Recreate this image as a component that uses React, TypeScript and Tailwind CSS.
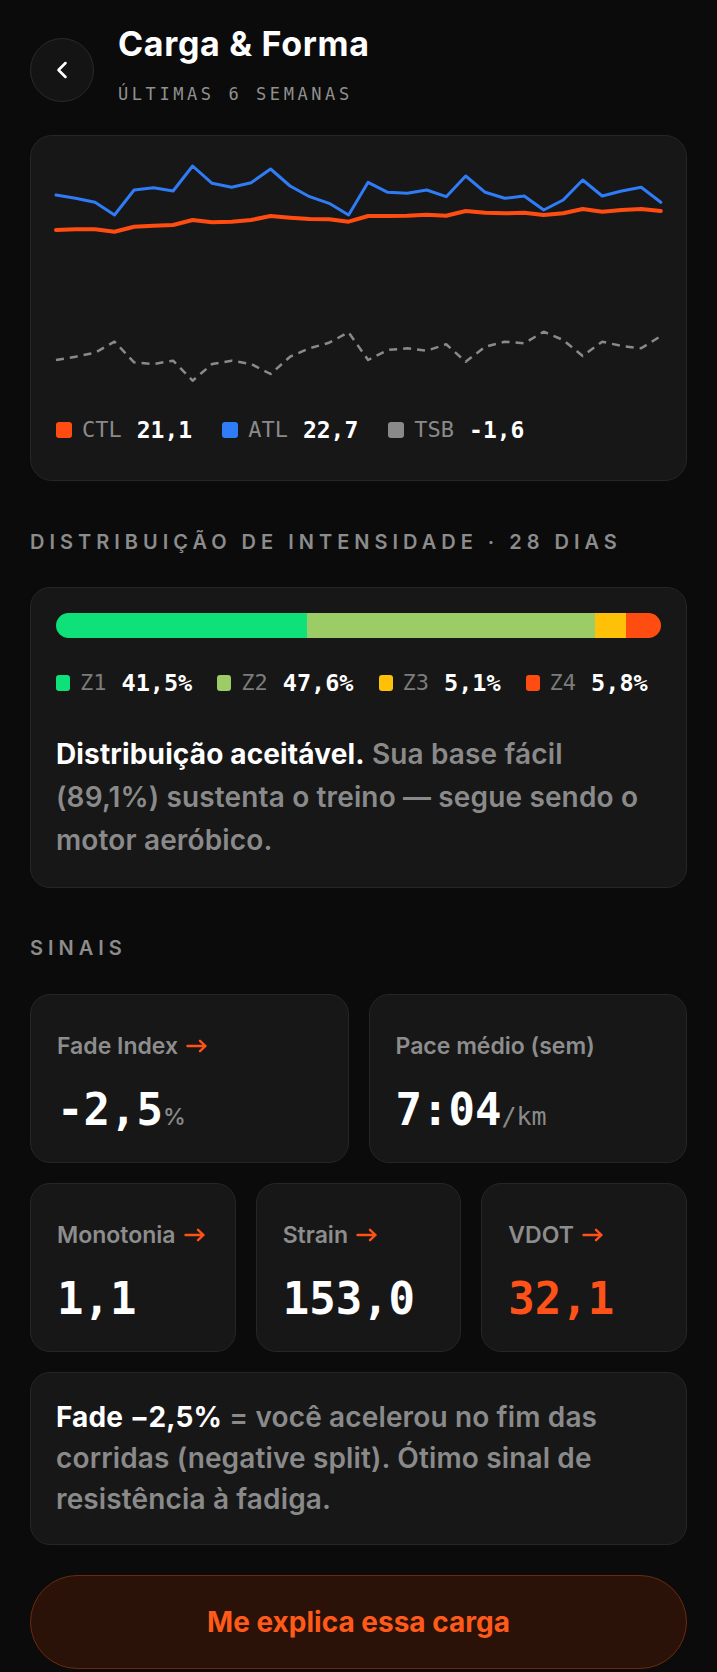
import { ChevronLeft } from 'lucide-react';

const mono = 'font-[family-name:DejaVu_Sans_Mono,monospace]';

const blue = [165, 175, 187, 225, 150, 143, 153, 78, 130, 142, 128, 87, 138, 170, 190, 225, 127, 157, 160, 150, 170, 108, 157, 175, 168, 210, 180, 120, 168, 153, 142, 187];
const orange = [270, 268, 268, 275, 260, 257, 255, 240, 247, 245, 240, 228, 233, 237, 238, 245, 228, 228, 227, 224, 227, 213, 218, 220, 218, 225, 220, 207, 215, 210, 207, 213];
const gray = [660, 650, 638, 605, 667, 672, 662, 722, 672, 662, 672, 702, 650, 625, 608, 577, 660, 630, 625, 632, 613, 665, 620, 605, 610, 575, 600, 648, 605, 618, 625, 588];

function toPoints(ys: number[]) {
  return ys
    .map((y, i) => {
      const x = ((60 + i * 46.77) * 654) / 1568;
      return `${x.toFixed(1)},${(y / 3).toFixed(1)}`;
    })
    .join(' ');
}

function Arrow() {
  return (
    <svg width="22" height="14" viewBox="0 0 22 14" className="ml-[8px] inline-block" fill="none" stroke="#ff5219" strokeWidth={2.4} strokeLinecap="round" strokeLinejoin="round">
      <path d="M1.5 7h18M14 1.8 19.5 7 14 12.2" />
    </svg>
  );
}

function Legend({ color, label, value }: { color: string; label: string; value: string }) {
  return (
    <div className="flex items-center">
      <span className={`w-[16px] h-[16px] rounded-[3px] ${color}`} />
      <span className={`ml-[10px] text-[22px] text-[#8a8a8a] ${mono}`}>{label}</span>
      <span className={`ml-[15px] text-[23px] text-white font-bold ${mono}`}>{value}</span>
    </div>
  );
}

function Zone({ color, label, value }: { color: string; label: string; value: string }) {
  return (
    <div className="flex items-center">
      <span className={`w-[14px] h-[16px] rounded-[3px] ${color}`} />
      <span className={`ml-[10px] text-[22px] text-[#7c7c7c] ${mono}`}>{label}</span>
      <span className={`ml-[15px] text-[23.5px] text-white font-bold ${mono}`}>{value}</span>
    </div>
  );
}

function Signal({ label, arrow, children }: { label: string; arrow?: boolean; children: React.ReactNode }) {
  return (
    <div className="h-[169px] rounded-[20px] border border-[#262626] bg-[#171717] px-[26px] pt-[37px]">
      <div className="flex items-center text-[23px] leading-[28px] font-semibold text-[#8d8d8d]">
        {label}
        {arrow && <Arrow />}
      </div>
      <div className="mt-[28px] flex items-baseline">{children}</div>
    </div>
  );
}

export default function App() {
  return (
    <div className="min-h-screen bg-[#0b0b0b] font-[family-name:Inter,sans-serif] px-[30px] pb-[2px]">
      {/* Header */}
      <div className="flex items-start gap-[24px] pt-[24px]">
        <button className="mt-[14px] w-[64px] h-[64px] rounded-full border border-[#2a2a2a] bg-[#141414] flex items-center justify-center">
          <ChevronLeft size={28} strokeWidth={2.2} className="text-white" />
        </button>
        <div>
          <h1 className="text-[34px] leading-[40px] font-bold text-white tracking-[0.02em]">Carga &amp; Forma</h1>
          <p className={`mt-[18px] text-[17px] leading-[24px] tracking-[0.21em] text-[#909090] ${mono}`}>ÚLTIMAS 6 SEMANAS</p>
        </div>
      </div>

      {/* Chart */}
      <div className="mt-[29px] rounded-[22px] border border-[#262626] bg-[#171717] overflow-hidden pb-[36px]">
        <svg width={654} height={260} className="block mt-[4px]" viewBox="0 0 654 260">
          <polyline points={toPoints(gray)} fill="none" stroke="#8a8a8a" strokeWidth={2.5} strokeDasharray="8 6" strokeLinejoin="round" />
          <polyline points={toPoints(blue)} fill="none" stroke="#2f7cf6" strokeWidth={3} strokeLinejoin="round" strokeLinecap="round" />
          <polyline points={toPoints(orange)} fill="none" stroke="#ff4d12" strokeWidth={4} strokeLinejoin="round" strokeLinecap="round" />
        </svg>
        <div className="mt-[16px] pl-[25px] flex items-center gap-[30px] leading-[28px]">
          <Legend color="bg-[#ff4d12]" label="CTL" value="21,1" />
          <Legend color="bg-[#2f7cf6]" label="ATL" value="22,7" />
          <Legend color="bg-[#8a8a8a]" label="TSB" value="-1,6" />
        </div>
      </div>

      {/* Intensity */}
      <h2 className="mt-[49px] text-[20px] leading-[24px] font-semibold tracking-[0.25em] text-[#8c8c8c]">
        DISTRIBUIÇÃO DE INTENSIDADE · 28 DIAS
      </h2>
      <div className="mt-[33px] rounded-[20px] border border-[#262626] bg-[#171717] px-[25px] pt-[25px] pb-[25px]">
        <div className="flex h-[25px] rounded-full overflow-hidden">
          <div className="bg-[#0ee07a]" style={{ width: '41.5%' }} />
          <div className="bg-[#9ccc65]" style={{ width: '47.6%' }} />
          <div className="bg-[#ffc107]" style={{ width: '5.1%' }} />
          <div className="bg-[#ff4d12]" style={{ width: '5.8%' }} />
        </div>
        <div className="mt-[31px] flex items-center gap-[25px] leading-[28px]">
          <Zone color="bg-[#0ee07a]" label="Z1" value="41,5%" />
          <Zone color="bg-[#9ccc65]" label="Z2" value="47,6%" />
          <Zone color="bg-[#ffc107]" label="Z3" value="5,1%" />
          <Zone color="bg-[#ff4d12]" label="Z4" value="5,8%" />
        </div>
        <p className="mt-[36px] text-[28px] leading-[43px] font-semibold text-[#8a8a8a] tracking-[0.005em]">
          <span className="font-bold text-white">Distribuição aceitável.</span> Sua base fácil (89,1%) sustenta o treino — segue sendo o motor aeróbico.
        </p>
      </div>

      {/* Signals */}
      <h2 className="mt-[48px] text-[20px] leading-[24px] font-semibold tracking-[0.25em] text-[#8c8c8c]">SINAIS</h2>
      <div className="mt-[34px] grid grid-cols-2 gap-[20px]">
        <Signal label="Fade Index" arrow>
          <span className={`text-[44px] leading-[44px] font-bold text-white ${mono}`}>-2,5</span>
          <span className="text-[23px] font-medium text-[#8a8a8a]">%</span>
        </Signal>
        <Signal label="Pace médio (sem)">
          <span className={`text-[44px] leading-[44px] font-bold text-white ${mono}`}>7:04</span>
          <span className={`text-[25px] text-[#8a8a8a] ${mono}`}>/km</span>
        </Signal>
      </div>
      <div className="mt-[20px] grid grid-cols-3 gap-[20px]">
        <Signal label="Monotonia" arrow>
          <span className={`text-[44px] leading-[44px] font-bold text-white ${mono}`}>1,1</span>
        </Signal>
        <Signal label="Strain" arrow>
          <span className={`text-[44px] leading-[44px] font-bold text-white ${mono}`}>153,0</span>
        </Signal>
        <Signal label="VDOT" arrow>
          <span className={`text-[44px] leading-[44px] font-bold text-[#ff5219] ${mono}`}>32,1</span>
        </Signal>
      </div>

      <div className="mt-[20px] rounded-[20px] border border-[#262626] bg-[#171717] px-[25px] pt-[24px] pb-[24px]">
        <p className="text-[28px] leading-[41px] font-semibold text-[#8a8a8a] tracking-[0.005em]">
          <span className="font-bold text-white">Fade −2,5%</span> = você acelerou no fim das corridas (negative split). Ótimo sinal de resistência à fadiga.
        </p>
      </div>

      <button className="mt-[30px] w-full h-[94px] rounded-full border border-[#6b2a10] bg-[#2a1208] text-[28px] font-bold text-[#ff5a1a]">
        Me explica essa carga
      </button>
    </div>
  );
}
